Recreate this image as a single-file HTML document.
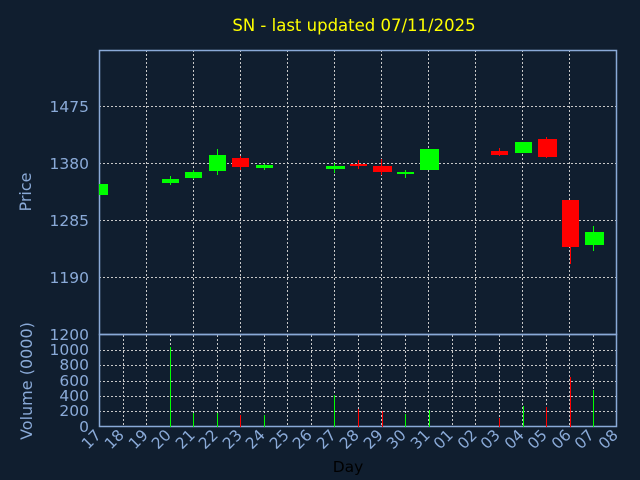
<!DOCTYPE html>
<html><head><style>
html,body{margin:0;padding:0;background:#101e2f;}
svg{display:block;}
text{font-family:"DejaVu Sans","Liberation Sans",sans-serif;}
</style></head><body>
<svg width="640" height="480" viewBox="0 0 640 480" xmlns="http://www.w3.org/2000/svg">
<rect width="640" height="480" fill="#101e2f"/>
<text x="354" y="31" fill="#ffff00" font-size="16.5" text-anchor="middle">SN - last updated 07/11/2025</text>
<g stroke="#c8c8c8" stroke-width="1" stroke-dasharray="2,2">
<line x1="99" y1="106.5" x2="617" y2="106.5"/>
<line x1="99" y1="163.5" x2="617" y2="163.5"/>
<line x1="99" y1="220.5" x2="617" y2="220.5"/>
<line x1="99" y1="277.5" x2="617" y2="277.5"/>
<line x1="146.5" y1="50" x2="146.5" y2="334"/>
<line x1="193.5" y1="50" x2="193.5" y2="334"/>
<line x1="240.5" y1="50" x2="240.5" y2="334"/>
<line x1="287.5" y1="50" x2="287.5" y2="334"/>
<line x1="334.5" y1="50" x2="334.5" y2="334"/>
<line x1="381.5" y1="50" x2="381.5" y2="334"/>
<line x1="428.5" y1="50" x2="428.5" y2="334"/>
<line x1="475.5" y1="50" x2="475.5" y2="334"/>
<line x1="522.5" y1="50" x2="522.5" y2="334"/>
<line x1="569.5" y1="50" x2="569.5" y2="334"/>
<line x1="99" y1="350.5" x2="617" y2="350.5"/>
<line x1="99" y1="365.5" x2="617" y2="365.5"/>
<line x1="99" y1="381.5" x2="617" y2="381.5"/>
<line x1="99" y1="396.5" x2="617" y2="396.5"/>
<line x1="99" y1="411.5" x2="617" y2="411.5"/>
<line x1="123.5" y1="335" x2="123.5" y2="427"/><line x1="146.5" y1="335" x2="146.5" y2="427"/><line x1="170.5" y1="335" x2="170.5" y2="427"/><line x1="193.5" y1="335" x2="193.5" y2="427"/><line x1="217.5" y1="335" x2="217.5" y2="427"/><line x1="240.5" y1="335" x2="240.5" y2="427"/><line x1="264.5" y1="335" x2="264.5" y2="427"/><line x1="287.5" y1="335" x2="287.5" y2="427"/><line x1="311.5" y1="335" x2="311.5" y2="427"/><line x1="334.5" y1="335" x2="334.5" y2="427"/><line x1="358.5" y1="335" x2="358.5" y2="427"/><line x1="381.5" y1="335" x2="381.5" y2="427"/><line x1="405.5" y1="335" x2="405.5" y2="427"/><line x1="428.5" y1="335" x2="428.5" y2="427"/><line x1="452.5" y1="335" x2="452.5" y2="427"/><line x1="475.5" y1="335" x2="475.5" y2="427"/><line x1="499.5" y1="335" x2="499.5" y2="427"/><line x1="522.5" y1="335" x2="522.5" y2="427"/><line x1="546.5" y1="335" x2="546.5" y2="427"/><line x1="569.5" y1="335" x2="569.5" y2="427"/><line x1="593.5" y1="335" x2="593.5" y2="427"/>
</g>
<g stroke="#8aaad8" stroke-width="1.5" fill="none">
<rect x="99.5" y="50.5" width="517" height="284"/>
<rect x="99.5" y="334.5" width="517" height="92"/>
</g>
<g stroke-width="1">
<rect x="99" y="184" width="9" height="11" fill="#00ff00"/>
<line x1="170.5" y1="176" x2="170.5" y2="185" stroke="#00ff00"/><rect x="162" y="179" width="17" height="4" fill="#00ff00"/>
<line x1="193.5" y1="170" x2="193.5" y2="179" stroke="#00ff00"/><rect x="185" y="172" width="17" height="6" fill="#00ff00"/>
<line x1="217.5" y1="149" x2="217.5" y2="175" stroke="#00ff00"/><rect x="209" y="155" width="17" height="16" fill="#00ff00"/>
<line x1="240.5" y1="156" x2="240.5" y2="170" stroke="#ff0000"/><rect x="232" y="158" width="17" height="9" fill="#ff0000"/>
<line x1="264.5" y1="164" x2="264.5" y2="170" stroke="#00ff00"/><rect x="256" y="165" width="17" height="3" fill="#00ff00"/>
<line x1="334.5" y1="163" x2="334.5" y2="173" stroke="#00ff00"/><rect x="326" y="166" width="19" height="3" fill="#00ff00"/>
<line x1="358.5" y1="160" x2="358.5" y2="169" stroke="#ff0000"/><rect x="350" y="164" width="17" height="2" fill="#ff0000"/>
<line x1="381.5" y1="159" x2="381.5" y2="175" stroke="#ff0000"/><rect x="373" y="166" width="19" height="6" fill="#ff0000"/>
<line x1="405.5" y1="170" x2="405.5" y2="178" stroke="#00ff00"/><rect x="397" y="172" width="17" height="2" fill="#00ff00"/>
<rect x="420" y="149" width="19" height="21" fill="#00ff00"/>
<line x1="499.5" y1="148" x2="499.5" y2="156" stroke="#ff0000"/><rect x="491" y="151" width="17" height="4" fill="#ff0000"/>
<rect x="515" y="142" width="17" height="11" fill="#00ff00"/>
<line x1="546.5" y1="137" x2="546.5" y2="158" stroke="#ff0000"/><rect x="538" y="139" width="19" height="18" fill="#ff0000"/>
<line x1="570.5" y1="200" x2="570.5" y2="264" stroke="#ff0000"/><rect x="562" y="200" width="17" height="47" fill="#ff0000"/>
<line x1="593.5" y1="226" x2="593.5" y2="251" stroke="#00ff00"/><rect x="585" y="232" width="19" height="13" fill="#00ff00"/>
</g>
<g stroke-width="1">
<line x1="170.5" y1="347" x2="170.5" y2="427" stroke="#00ff00"/>
<line x1="193.5" y1="413" x2="193.5" y2="427" stroke="#00ff00"/>
<line x1="217.5" y1="413" x2="217.5" y2="427" stroke="#00ff00"/>
<line x1="240.5" y1="415" x2="240.5" y2="427" stroke="#ff0000"/>
<line x1="264.5" y1="415" x2="264.5" y2="427" stroke="#00ff00"/>
<line x1="334.5" y1="395" x2="334.5" y2="427" stroke="#00ff00"/>
<line x1="358.5" y1="409" x2="358.5" y2="427" stroke="#ff0000"/>
<line x1="382.5" y1="411" x2="382.5" y2="427" stroke="#ff0000"/>
<line x1="405.5" y1="414" x2="405.5" y2="427" stroke="#00ff00"/>
<line x1="429.5" y1="410" x2="429.5" y2="427" stroke="#00ff00"/>
<line x1="499.5" y1="418" x2="499.5" y2="427" stroke="#ff0000"/>
<line x1="523.5" y1="406" x2="523.5" y2="427" stroke="#00ff00"/>
<line x1="546.5" y1="407" x2="546.5" y2="427" stroke="#ff0000"/>
<line x1="570.5" y1="377" x2="570.5" y2="427" stroke="#ff0000"/>
<line x1="593.5" y1="390" x2="593.5" y2="427" stroke="#00ff00"/>
</g>
<g fill="#8aaad8" font-size="15.5" text-anchor="end">
<text x="89" y="112">1475</text>
<text x="89" y="169">1380</text>
<text x="89" y="226">1285</text>
<text x="89" y="283">1190</text>
<text x="89" y="340">1200</text>
<text x="89" y="355">1000</text>
<text x="89" y="370">800</text>
<text x="89" y="386">600</text>
<text x="89" y="401">400</text>
<text x="89" y="416">200</text>
<text x="89" y="432">0</text>
</g>
<text transform="translate(31,192) rotate(-90)" fill="#8aaad8" font-size="16" text-anchor="middle">Price</text>
<text transform="translate(32,381) rotate(-90)" fill="#8aaad8" font-size="16" text-anchor="middle">Volume (0000)</text>
<g fill="#8aaad8" font-size="15.5" text-anchor="end">
<text transform="translate(102,436) rotate(-45)">17</text>
<text transform="translate(125,436) rotate(-45)">18</text>
<text transform="translate(149,436) rotate(-45)">19</text>
<text transform="translate(172,436) rotate(-45)">20</text>
<text transform="translate(196,436) rotate(-45)">21</text>
<text transform="translate(219,436) rotate(-45)">22</text>
<text transform="translate(243,436) rotate(-45)">23</text>
<text transform="translate(266,436) rotate(-45)">24</text>
<text transform="translate(290,436) rotate(-45)">25</text>
<text transform="translate(313,436) rotate(-45)">26</text>
<text transform="translate(337,436) rotate(-45)">27</text>
<text transform="translate(360,436) rotate(-45)">28</text>
<text transform="translate(384,436) rotate(-45)">29</text>
<text transform="translate(407,436) rotate(-45)">30</text>
<text transform="translate(431,436) rotate(-45)">31</text>
<text transform="translate(454,436) rotate(-45)">01</text>
<text transform="translate(478,436) rotate(-45)">02</text>
<text transform="translate(501,436) rotate(-45)">03</text>
<text transform="translate(525,436) rotate(-45)">04</text>
<text transform="translate(548,436) rotate(-45)">05</text>
<text transform="translate(572,436) rotate(-45)">06</text>
<text transform="translate(595,436) rotate(-45)">07</text>
<text transform="translate(619,436) rotate(-45)">08</text>
</g>
<text x="348" y="472" fill="#000000" font-size="15.5" text-anchor="middle">Day</text>
</svg>
</body></html>
